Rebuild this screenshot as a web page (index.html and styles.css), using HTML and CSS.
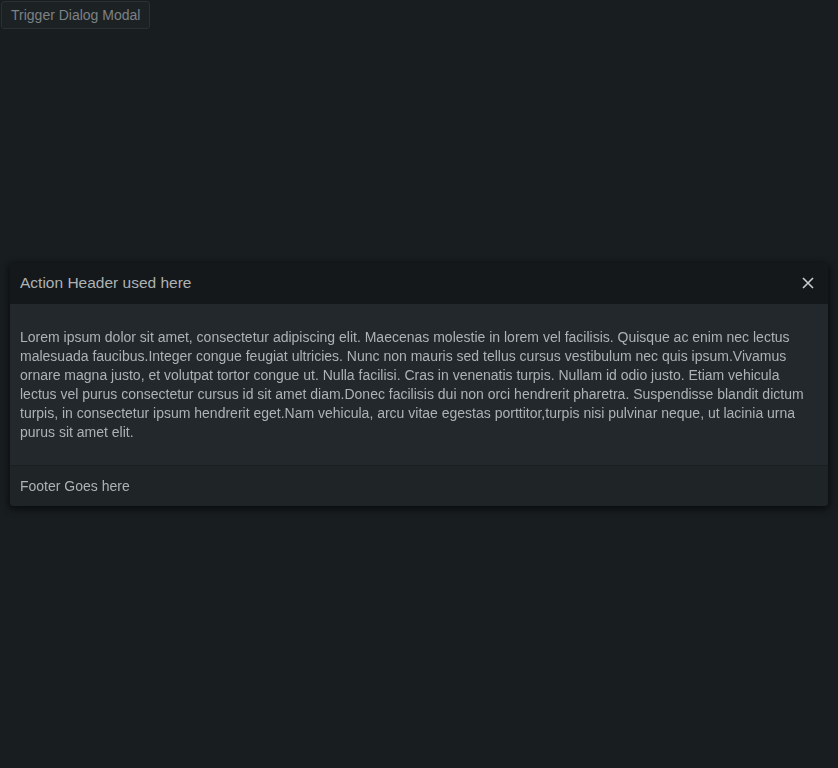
FILE: index.html
```html
<!DOCTYPE html>
<html>
<head>
<meta charset="utf-8">
<link rel="stylesheet" href="styles.css">
</head>
<body>
<button class="trigger">Trigger Dialog Modal</button>
<div class="overlay">
  <div class="dialog">
    <div class="dialog-header">
      <span class="title">Action Header used here</span>
      <span class="close"><svg width="12" height="12" viewBox="0 0 12 12"><path d="M1 1L11 11M11 1L1 11" stroke="#c9cdd0" stroke-width="1.6" fill="none"/></svg></span>
    </div>
    <div class="dialog-body">Lorem ipsum dolor sit amet, consectetur adipiscing elit. Maecenas molestie in lorem vel facilisis. Quisque ac enim nec lectus malesuada faucibus.Integer congue feugiat ultricies. Nunc non mauris sed tellus cursus vestibulum nec quis ipsum.Vivamus ornare magna justo, et volutpat tortor congue ut. Nulla facilisi. Cras in venenatis turpis. Nullam id odio justo. Etiam vehicula lectus vel purus consectetur cursus id sit amet diam.Donec facilisis dui non orci hendrerit pharetra. Suspendisse blandit dictum turpis, in consectetur ipsum hendrerit eget.Nam vehicula, arcu vitae egestas porttitor,turpis nisi pulvinar neque, ut lacinia urna purus sit amet elit.</div>
    <div class="dialog-footer">Footer Goes here</div>
  </div>
</div>
</body>
</html>
```
FILE: styles.css
```css
html, body {
  margin: 0;
  padding: 0;
  height: 100%;
  background: #181d20;
  font-family: "Liberation Sans", Arial, sans-serif;
}
.trigger {
  margin: 1px;
  height: 28px;
  padding: 0 9px;
  background: #1c2124;
  border: 1px solid #2a3033;
  border-radius: 3px;
  color: #7d8285;
  font-family: "Liberation Sans", Arial, sans-serif;
  font-size: 14px;
}
.overlay {
  position: fixed;
  inset: 0;
  display: flex;
  align-items: center;
  padding: 0 10px;
}
.dialog {
  flex: 1;
  border-radius: 4px;
  overflow: hidden;
  box-shadow: 0 2px 6px 2px rgba(0,0,0,0.5);
  color: #adb2b5;
  font-size: 14px;
  line-height: 19px;
}
.dialog-header {
  display: flex;
  align-items: center;
  justify-content: space-between;
  height: 41px;
  box-sizing: border-box;
  padding: 0 14px 1px 10px;
  background: #14181a;
  font-size: 15.5px;
}
.close {
  display: flex;
}
.dialog-body {
  background: #22282b;
  padding: 24px 10px 23px;
}
.dialog-footer {
  background: #1f2427;
  border-top: 1px solid #1a1f21;
  padding: 11px 10px 10px;
}
```
